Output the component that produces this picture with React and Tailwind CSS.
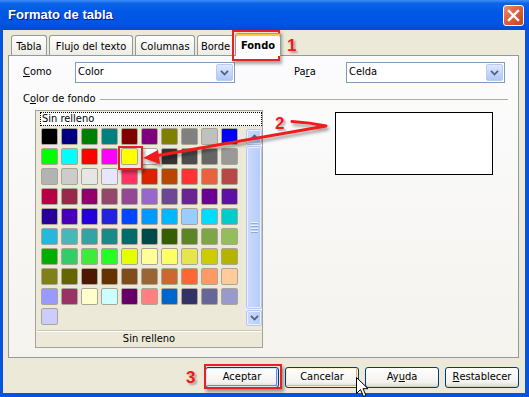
import React from "react";

const FONT = "font-['DejaVu_Sans_Condensed','DejaVu_Sans',sans-serif]";

const SWATCHES = [
  "bg-[#000000]", "bg-[#000080]", "bg-[#008000]", "bg-[#008080]", "bg-[#800000]", "bg-[#800080]", "bg-[#808000]", "bg-[#808080]", "bg-[#c0c0c0]", "bg-[#0000ff]",
  "bg-[#00ff00]", "bg-[#00ffff]", "bg-[#ff0000]", "bg-[#ff00ff]", "bg-[#ffff00]", "bg-[#ffffff]", "bg-[#333333]", "bg-[#4c4c4c]", "bg-[#666666]", "bg-[#999999]",
  "bg-[#b3b3b3]", "bg-[#cccccc]", "bg-[#e6e6e6]", "bg-[#e6e6ff]", "bg-[#ff3366]", "bg-[#dc2300]", "bg-[#b84700]", "bg-[#ff3333]", "bg-[#eb613d]", "bg-[#b84747]",
  "bg-[#b80047]", "bg-[#99284c]", "bg-[#94006b]", "bg-[#94476b]", "bg-[#944794]", "bg-[#9966cc]", "bg-[#6b4794]", "bg-[#6b2394]", "bg-[#6b0094]", "bg-[#5e11a6]",
  "bg-[#280099]", "bg-[#4700b8]", "bg-[#2300dc]", "bg-[#2323dc]", "bg-[#0047ff]", "bg-[#0099ff]", "bg-[#00b8ff]", "bg-[#99ccff]", "bg-[#00dcff]", "bg-[#00cccc]",
  "bg-[#23b8dc]", "bg-[#47b8b8]", "bg-[#33a3a3]", "bg-[#198a8a]", "bg-[#006b6b]", "bg-[#004a4a]", "bg-[#355e00]", "bg-[#5c8526]", "bg-[#7da647]", "bg-[#94bd5e]",
  "bg-[#00ae00]", "bg-[#33cc66]", "bg-[#3deb3d]", "bg-[#23ff23]", "bg-[#e6ff00]", "bg-[#ffff99]", "bg-[#ffff66]", "bg-[#e6e64c]", "bg-[#cccc00]", "bg-[#b3b300]",
  "bg-[#808019]", "bg-[#666600]", "bg-[#4c1900]", "bg-[#663300]", "bg-[#804c19]", "bg-[#996633]", "bg-[#cc6633]", "bg-[#ff6633]", "bg-[#ff9966]", "bg-[#ffcc99]",
  "bg-[#9999ff]", "bg-[#993366]", "bg-[#ffffcc]", "bg-[#ccffff]", "bg-[#660066]", "bg-[#ff8080]", "bg-[#0066cc]", "bg-[#333366]", "bg-[#666699]", "bg-[#9999cc]",
  "bg-[#ccccff]",
];

function Chevron({ up }) {
  return (
    <svg width="9" height="6" viewBox="0 0 9 6">
      <path
        d={up ? "M1 5.2 L4.5 1.5 L8 5.2" : "M1 0.8 L4.5 4.5 L8 0.8"}
        fill="none"
        stroke="#4d6185"
        strokeWidth="1.8"
      />
    </svg>
  );
}

function DropButton() {
  return (
    <div className="w-[17px] h-[17px] rounded-[2px] border border-[#b9cbf3] bg-[linear-gradient(to_bottom,#dfe8fd,#c1d3fb_60%,#b2c7f7)] flex items-center justify-center">
      <Chevron />
    </div>
  );
}

function Combo({ text, width }) {
  return (
    <div
      className={`${width} h-[21px] border border-[#7f9db9] bg-white flex items-center justify-between pl-[2px] pr-[1px]`}
    >
      <span className="text-[11px] text-black">{text}</span>
      <DropButton />
    </div>
  );
}

function XPButton({ children, kind }) {
  const ring =
    kind === "default"
      ? "shadow-[inset_0_0_0_1px_#cee7ff,inset_-1px_-1px_0_1px_#6982ee]"
      : kind === "hover"
      ? "shadow-[inset_0_0_0_1px_#fff0cf,inset_-1px_-1px_0_1px_#f8b330]"
      : "shadow-[inset_0_-1px_0_0_#d6d0c5]";
  return (
    <div
      className={`w-[74px] h-[21px] rounded-[3px] border border-[#003c74] bg-[linear-gradient(to_bottom,#ffffff,#f3f2ee_75%,#dcd7cd)] flex items-center justify-center text-[11px] text-black ${ring}`}
    >
      {children}
    </div>
  );
}

function Tab({ children, width, selected }) {
  if (selected) {
    return (
      <div
        className={`${width} h-[23px] relative z-10 -mb-[1px] rounded-t-[3px] border border-b-0 border-[#919b9c] border-t-[#e68b2c] bg-[#fcfcfe] flex items-start justify-center pt-[4px] text-[11px] font-bold text-black shadow-[inset_0_2px_0_0_#ffc73c]`}
      >
        {children}
      </div>
    );
  }
  return (
    <div
      className={`${width} h-[20px] rounded-t-[3px] border border-b-0 border-[#919b9c] bg-[linear-gradient(to_bottom,#ffffff,#f3f2ec_70%,#ecebe5)] flex items-start justify-center pt-[3px] text-[11px] text-black`}
    >
      {children}
    </div>
  );
}

function Scrollbar() {
  const part =
    "rounded-[2px] border border-[#b4c8f6] bg-[linear-gradient(to_right,#cad9fd,#c1d3fb_50%,#b5cbf8)] shadow-[inset_0_0_0_1px_#e9f0ff]";
  return (
    <div className="w-[16px] h-[197px] mt-[1px] ml-[8px] flex flex-col gap-[1px] bg-[#f1f4fc]">
      <div className={`h-[16px] flex items-center justify-center ${part}`}>
        <Chevron up />
      </div>
      <div className={`flex-1 flex flex-col items-center justify-center gap-[1px] ${part}`}>
        <div className="w-[7px] h-[1px] bg-[#eef4fe] border-b border-[#8caae6] box-content" />
        <div className="w-[7px] h-[1px] bg-[#eef4fe] border-b border-[#8caae6] box-content" />
        <div className="w-[7px] h-[1px] bg-[#eef4fe] border-b border-[#8caae6] box-content" />
        <div className="w-[7px] h-[1px] bg-[#eef4fe] border-b border-[#8caae6] box-content" />
      </div>
      <div className={`h-[16px] flex items-center justify-center ${part}`}>
        <Chevron />
      </div>
    </div>
  );
}

export default function App() {
  return (
    <div className={`w-[529px] h-[397px] relative overflow-hidden flex flex-col bg-[#0653e0] ${FONT}`}>
      {/* Title bar */}
      <div className="h-[30px] shrink-0 flex items-center justify-between pl-[8px] pr-[5px] bg-[linear-gradient(to_bottom,#3c8ef8_0%,#0a63e6_12%,#0058e6_40%,#0055e3_75%,#004bd3_100%)]">
        <span className="font-['Liberation_Sans',sans-serif] font-bold text-[13px] text-white [text-shadow:1px_1px_0_#0a1883]">
          Formato de tabla
        </span>
        <div className="w-[21px] h-[21px] rounded-[3px] border border-white bg-[linear-gradient(135deg,#f08c6c,#e0603c_45%,#c7411f)] flex items-center justify-center">
          <svg width="13" height="13" viewBox="0 0 13 13">
            <path d="M2 2 L11 11 M11 2 L2 11" stroke="white" strokeWidth="2.4" strokeLinecap="square" />
          </svg>
        </div>
      </div>

      {/* Body */}
      <div className="flex-1 ml-[3px] mr-[4px] mb-[4px] bg-[#ece9d8] flex flex-col">
        {/* Tabs */}
        <div className="h-[25px] shrink-0 flex items-end pl-[8px] gap-[2px]">
          <Tab width="w-[36px]">Tabla</Tab>
          <Tab width="w-[84px]">Flujo del texto</Tab>
          <Tab width="w-[60px]">Columnas</Tab>
          <Tab width="w-[37px]">Borde</Tab>
          <div className="-ml-[1px]">
            <Tab width="w-[46px]" selected>
              Fondo
            </Tab>
          </div>
        </div>

        {/* Panel */}
        <div className="ml-[5px] w-[511px] h-[303px] shrink-0 border border-[#919b9c] bg-[linear-gradient(to_bottom,#fcfcfe,#f4f3ee)] flex flex-col">
          {/* Como / Para */}
          <div className="mt-[6px] h-[21px] flex items-center pl-[14px] text-[11px] text-black">
            <span className="w-[52px]">
              <span className="underline">C</span>omo
            </span>
            <Combo text="Color" width="w-[160px]" />
            <span className="w-[52px] ml-[59px]">
              Pa<span className="underline">r</span>a
            </span>
            <Combo text="Celda" width="w-[159px]" />
          </div>

          {/* Group label */}
          <div className="mt-[10px] h-[13px] flex items-center pl-[14px] pr-[10px] text-[11px] text-black">
            <span>
              C<span className="underline">o</span>lor de fondo
            </span>
            <div className="flex-1 ml-[4px] h-0 border-t border-[#b0ada0]" />
          </div>

          {/* Content */}
          <div className="mt-[4px] flex items-start pl-[26px]">
            {/* List box */}
            <div className="w-[228px] h-[238px] border border-[#a5a296] bg-[#ece9d8] flex flex-col">
              <div className="mt-[1px] ml-[4px] h-[14px] border border-dotted border-black bg-white flex items-center pl-[1px] text-[11px] text-black leading-none">
                Sin relleno
              </div>
              <div className="mt-[2px] h-[202px] flex items-start">
                <div className="ml-[5px] grid grid-cols-10 gap-[3px] content-start">
                  {SWATCHES.map((c, i) => (
                    <div
                      key={i}
                      className={`w-[17px] h-[17px] rounded-[2px] border border-[#aaa697] ${c}`}
                    />
                  ))}
                </div>
                <Scrollbar />
              </div>
              <div className="flex-1 mx-[1px] border-t border-[#c9c6b6] shadow-[inset_0_1px_0_0_#ffffff] flex items-center justify-center text-[11px] text-black">
                Sin relleno
              </div>
            </div>

            {/* Preview */}
            <div className="ml-[72px] mt-[2px] w-[158px] h-[63px] border border-black bg-white" />
          </div>
        </div>

        {/* Buttons */}
        <div className="flex-1 flex items-start justify-end pr-[6px] pt-[9px] gap-[6px]">
          <XPButton kind="default">Aceptar</XPButton>
          <XPButton kind="hover">Cancelar</XPButton>
          <XPButton>
            Ay<span className="underline">u</span>da
          </XPButton>
          <XPButton>
            <span className="underline">R</span>establecer
          </XPButton>
        </div>
      </div>

      {/* Annotations */}
      <div className="absolute left-[232px] top-[30px] w-[48px] h-[31px] border-2 border-[#ea1f23] shadow-[2px_3px_3px_rgba(0,0,0,0.35)]" />
      <div className="absolute left-[204px] top-[364px] w-[78px] h-[25px] border-2 border-[#ea1f23] shadow-[2px_3px_3px_rgba(0,0,0,0.35)]" />
      <div className="absolute left-[118px] top-[146px] w-[25px] h-[24px] border-2 border-[#ea1f23] shadow-[2px_3px_3px_rgba(0,0,0,0.35)]" />

      <span className="absolute left-[287px] top-[33px] font-['Liberation_Sans',sans-serif] font-bold text-[17px] text-[#f01818] [text-shadow:2px_2px_2px_rgba(0,0,0,0.3)]">
        1
      </span>
      <span className="absolute left-[275px] top-[111px] font-['Liberation_Sans',sans-serif] font-bold text-[17px] text-[#f01818] [text-shadow:2px_2px_2px_rgba(0,0,0,0.3)]">
        2
      </span>
      <span className="absolute left-[186px] top-[365px] font-['Liberation_Sans',sans-serif] font-bold text-[17px] text-[#f01818] [text-shadow:2px_2px_2px_rgba(0,0,0,0.3)]">
        3
      </span>

      <svg className="absolute left-0 top-0 pointer-events-none" width="529" height="397" viewBox="0 0 529 397">
        <defs>
          <filter id="sh" x="-20%" y="-50%" width="140%" height="200%">
            <feDropShadow dx="2" dy="3" stdDeviation="1.6" floodColor="#000" floodOpacity="0.35" />
          </filter>
        </defs>
        <g filter="url(#sh)">
          <path
            d="M292 121.5 Q310 122.5 326 126 L158 155.5"
            fill="none"
            stroke="#ee1c1c"
            strokeWidth="3"
            strokeLinejoin="round"
            strokeLinecap="round"
          />
          <polygon points="143,158 158,150 160,164" fill="#ee1c1c" />
        </g>
        {/* Mouse cursor */}
        <g transform="translate(356.5 377.5)">
          <path
            d="M0 0 L0 16 L4 12 L7 19 L9.5 18 L6.5 11.2 L11.5 11.2 Z"
            fill="white"
            stroke="black"
            strokeWidth="1"
            strokeLinejoin="miter"
          />
        </g>
      </svg>
    </div>
  );
}
